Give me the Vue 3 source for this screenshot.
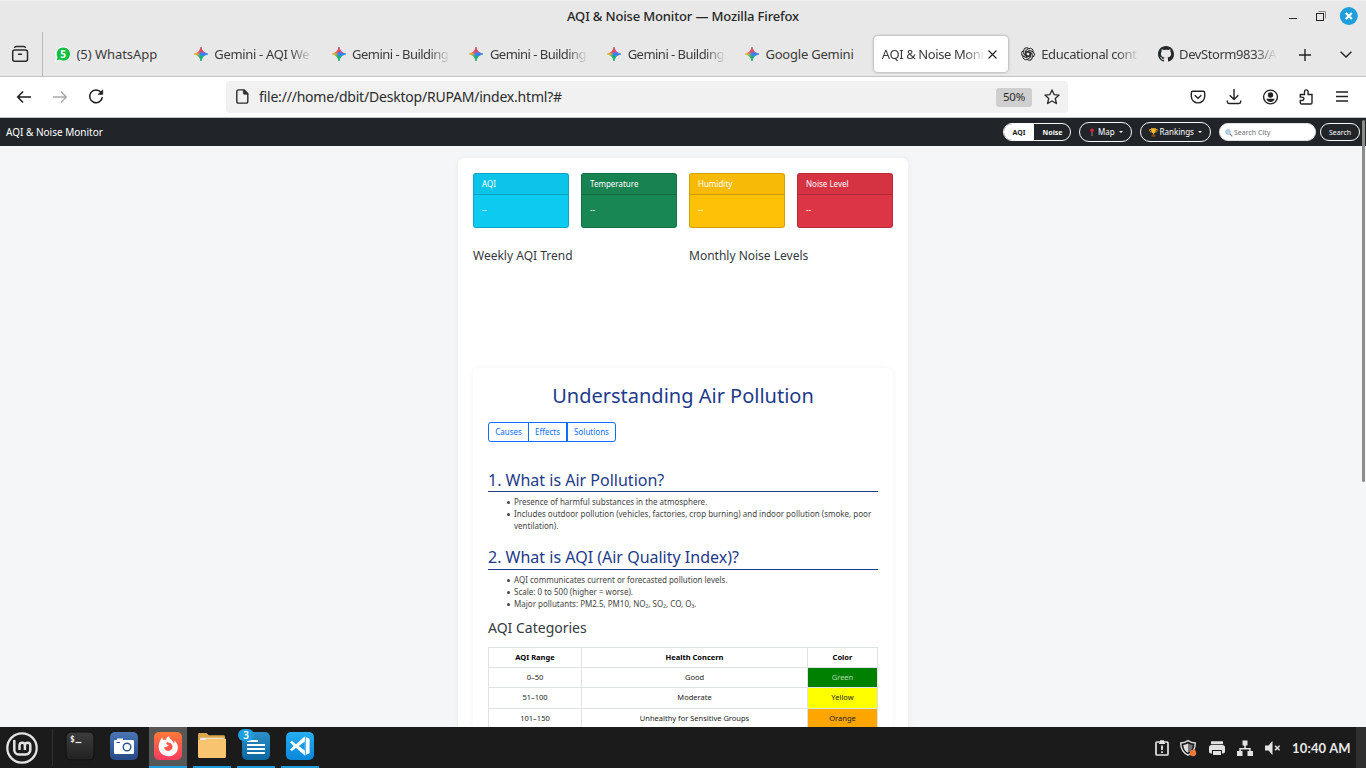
<script setup>
const tabs = [
  { icon: 'wa', text: '(5) WhatsApp', cls: 'w0' },
  { icon: 'gem', text: 'Gemini - AQI We', cls: 'w1' },
  { icon: 'gem', text: 'Gemini - Building', cls: 'w2' },
  { icon: 'gem', text: 'Gemini - Building', cls: 'w2' },
  { icon: 'gem', text: 'Gemini - Building', cls: 'w2' },
  { icon: 'gem', text: 'Google Gemini', cls: 'w3' },
  { icon: '', text: 'AQI & Noise Moni', cls: 'w4', active: true },
  { icon: 'gpt', text: 'Educational cont', cls: 'w5' },
  { icon: 'gh', text: 'DevStorm9833/A', cls: 'w6' },
]
const cards = [
  { name: 'AQI', cls: 'info' },
  { name: 'Temperature', cls: 'success' },
  { name: 'Humidity', cls: 'warning' },
  { name: 'Noise Level', cls: 'danger' },
]
const rows = [
  { range: '0–50', concern: 'Good', color: 'Green', cls: 'green' },
  { range: '51–100', concern: 'Moderate', color: 'Yellow', cls: 'yellow' },
  { range: '101–150', concern: 'Unhealthy for Sensitive Groups', color: 'Orange', cls: 'orange' },
]
const petals = [0, 60, 120, 180, 240, 300]
</script>

<template>
  <div class="screen">
    <svg class="defs" width="0" height="0">
      <defs>
        <linearGradient id="gt" x1="0" y1="0" x2="0" y2="1">
          <stop offset="0" stop-color="#f0444b" /><stop offset=".36" stop-color="#ee4d5d" />
          <stop offset=".5" stop-color="#ee4d5d" stop-opacity="0" />
        </linearGradient>
        <linearGradient id="gb" x1="0" y1="1" x2="0" y2="0">
          <stop offset="0" stop-color="#12b853" /><stop offset=".3" stop-color="#20b65c" />
          <stop offset=".5" stop-color="#20b65c" stop-opacity="0" />
        </linearGradient>
        <linearGradient id="gh" x1="0" y1="0" x2="1" y2="0">
          <stop offset="0" stop-color="#f9be10" /><stop offset=".25" stop-color="#e8b92a" />
          <stop offset=".48" stop-color="#3f8cf0" /><stop offset="1" stop-color="#2f80ff" />
        </linearGradient>
        <linearGradient id="term" x1="0" y1="0" x2="0" y2="1"><stop offset="0" stop-color="#3c3c3c" /><stop offset="1" stop-color="#222" /></linearGradient>
        <linearGradient id="cam" x1="0" y1="0" x2="0" y2="1"><stop offset="0" stop-color="#4a74b4" /><stop offset="1" stop-color="#274a86" /></linearGradient>
        <linearGradient id="fox" x1="0" y1="0" x2="0" y2="1"><stop offset="0" stop-color="#ff7a38" /><stop offset="1" stop-color="#fb3c60" /></linearGradient>
        <linearGradient id="lib" x1="0" y1="0" x2="0" y2="1"><stop offset="0" stop-color="#2d8fca" /><stop offset="1" stop-color="#0a679f" /></linearGradient>
        <linearGradient id="vsc" x1="0" y1="0" x2="0" y2="1"><stop offset="0" stop-color="#25aef3" /><stop offset="1" stop-color="#0a86d8" /></linearGradient>
      </defs>
    </svg>

    <header class="titlebar">
      <div class="wtitle"><span>AQI &amp; Noise Monitor — Mozilla Firefox</span></div>
      <svg class="wbtns" width="80" height="32" viewBox="1286 0 80 32">
        <path d="M1289 18.500h8" stroke="#2b2b2b" stroke-width="1" />
        <path d="M1318.500 11.500h7v7" fill="none" stroke="#888" />
        <rect x="1316.500" y="13.500" width="7" height="7" fill="#e8e8e8" stroke="#222" />
        <circle cx="1348.800" cy="16" r="9" fill="#1f9ede" />
        <path d="M1345.800 13l6 6M1351.800 13l-6 6" stroke="#fff" stroke-width="2.300" />
      </svg>
    </header>

    <div class="tabstrip">
      <div class="allbox">
        <svg width="18" height="18" viewBox="0 0 18 18" fill="none" stroke="#2b2b2b" stroke-width="1.500">
          <rect x="1.700" y="5" width="14.800" height="11.200" rx="2" /><path d="M3.500 2.900c.2-1 .8-1.400 1.700-1.400h7.600c.9 0 1.500.4 1.700 1.400M7 9.200h4" />
        </svg>
      </div>
      <div class="tabs">
        <div v-for="(t, i) in tabs" :key="i" class="tab" :class="{ active: t.active }">
          <svg v-if="t.icon === 'wa'" class="fav" width="16" height="16" viewBox="0 0 16 16">
            <path d="M8 .2a7.500 7.500 0 1 1-3.500 14.300L.2 15.700l.9-4.500A7.500 7.500 0 0 1 8 .2z" fill="#fff" />
            <path d="M8 1.400a6.600 6.600 0 1 1-3.200 12.100l-3 1 .7-3.300A6.600 6.600 0 0 1 8 1.400z" fill="#12c143" />
            <text x="8" y="11.700" text-anchor="middle" font-family="Noto Sans, sans-serif" font-weight="700" font-size="10" fill="#fff">5</text>
          </svg>
          <svg v-else-if="t.icon === 'gem'" class="fav" width="16" height="16" viewBox="0 0 16 16">
            <g stroke-width=".5">
              <path v-for="g in ['gh', 'gt', 'gb']" :key="g" :fill="`url(#${g})`" :stroke="`url(#${g})`" d="M8 1C8.900 5 11 7.100 15 8 11 8.900 8.900 11 8 15 7.100 11 5 8.900 1 8 5 7.100 7.100 5 8 1z" />
            </g>
            <path d="M8 5.500L15 8 8 10.800 6.800 8z" fill="#2f80ff" opacity=".7" />
          </svg>
          <svg v-else-if="t.icon === 'gpt'" class="fav" width="16" height="16" viewBox="0 0 24 24" fill="none" stroke="#262626" stroke-width="1.500">
            <path v-for="a in petals" :key="a" :transform="`rotate(${a} 12 12)`" d="M9.100 13.700V6.400l4-2.400a4.400 4.400 0 0 1 6.500 4.700M9.100 9.500l5.600-3.200" />
          </svg>
          <svg v-else-if="t.icon === 'gh'" class="fav" width="16" height="16" viewBox="0 0 16 16">
            <path fill="#24292e" d="M8 0C3.580 0 0 3.580 0 8c0 3.540 2.290 6.530 5.470 7.590.4.070.55-.17.55-.38 0-.19-.01-.82-.01-1.490-2.010.37-2.530-.49-2.690-.94-.09-.23-.48-.94-.82-1.130-.28-.15-.68-.52-.01-.53.63-.01 1.080.58 1.230.82.72 1.210 1.870.87 2.330.66.070-.52.28-.87.51-1.070-1.780-.2-3.640-.89-3.640-3.950 0-.87.31-1.590.82-2.150-.08-.2-.36-1.020.080-2.120 0 0 .67-.21 2.200.82.64-.18 1.320-.27 2-.27s1.360.09 2 .27c1.530-1.040 2.200-.82 2.200-.82.44 1.100.16 1.920.08 2.120.51.56.82 1.270.82 2.150 0 3.070-1.870 3.750-3.650 3.950.29.25.54.73.54 1.480 0 1.070-.01 1.930-.01 2.200 0 .21.15.46.55.38A8.010 8.010 0 0 0 16 8c0-4.420-3.580-8-8-8z" />
          </svg>
          <span class="ttext" :class="t.cls">{{ t.text }}</span>
          <svg v-if="t.active" class="tx" width="9" height="9" viewBox="0 0 9 9"><path d="M.5.5l8 8M8.500.5l-8 8" stroke="#222" stroke-width="1.100" /></svg>
        </div>
      </div>
      <svg class="plus" width="12" height="12" viewBox="0 0 12 12"><path d="M6 0v12M0 6h12" stroke="#222" stroke-width="1.400" /></svg>
      <svg class="chev" width="12" height="7" viewBox="0 0 12 7"><path d="M.6.7L6 6 11.400.7" fill="none" stroke="#222" stroke-width="1.400" /></svg>
    </div>

    <div class="navbar">
      <div class="navl">
        <svg width="16" height="16" viewBox="0 0 16 16" fill="none" stroke="#1c1c1c" stroke-width="1.500"><path d="M15 8H1.500M7 2.500L1.700 8l5.300 5.500" /></svg>
        <svg width="16" height="16" viewBox="0 0 16 16" fill="none" stroke="#aaa" stroke-width="1.500"><path d="M1 8h13M9 2.500L14.300 8 9 13.500" /></svg>
        <svg width="16" height="16" viewBox="0 0 16 16" fill="none" stroke="#1c1c1c" stroke-width="1.500"><path d="M13 3.300A6.400 6.400 0 1 0 14.400 8.200" /><path d="M14.800.8v4.700H10z" fill="#1c1c1c" stroke-width=".5" /></svg>
      </div>
      <div class="urlbar">
        <svg class="doc" width="13" height="15" viewBox="0 0 13 15" fill="none" stroke="#2b2b2b" stroke-width="1.400"><path d="M2.700.9h5.500l3.600 3.600v7.700a1.900 1.900 0 0 1-1.900 1.900H2.700A1.900 1.900 0 0 1 .8 12.200V2.800A1.900 1.900 0 0 1 2.700.9z" /><path d="M7.300.9v3.300c0 .7.400 1.100 1.100 1.100h3.300z" fill="#2b2b2b" stroke-width=".6" /></svg>
        <span class="url">file:///home/dbit/Desktop/RUPAM/index.html?#</span>
        <span class="zoomlvl">50%</span>
        <svg class="star" width="16" height="16" viewBox="0 0 16 16"><path d="M8 .9l2.100 4.700 5 .5-3.800 3.400 1.100 5L8 12l-4.400 2.500 1.100-5L.9 6.100l5-.5z" fill="none" stroke="#2b2b2b" stroke-width="1.300" stroke-linejoin="round" /></svg>
      </div>
      <div class="navr">
        <svg width="16" height="16" viewBox="0 0 16 16" fill="none" stroke="#222" stroke-width="1.400"><path d="M3 2.200h10c1 0 1.700.7 1.700 1.700v3.300a6.700 6.700 0 0 1-13.400 0V3.900c0-1 .7-1.700 1.700-1.700z" /><path d="M4.700 6.200L8 9.300l3.300-3.100" /></svg>
        <svg width="16" height="16" viewBox="0 0 16 16" fill="none" stroke="#222" stroke-width="1.400"><path d="M8 0v10.300M3.700 6.200L8 10.500l4.300-4.300M1.300 11.500v1.300c0 1 .7 1.700 1.700 1.700h10c1 0 1.700-.7 1.700-1.700v-1.300" /></svg>
        <svg width="16" height="16" viewBox="0 0 16 16"><circle cx="8.500" cy="8" r="6.900" fill="none" stroke="#222" stroke-width="1.400" /><circle cx="8.500" cy="6" r="2.700" fill="#222" /><path d="M4.300 9.800h8.400c-.4 2-2 3.200-4.200 3.200s-3.800-1.200-4.200-3.200z" fill="#222" /></svg>
        <svg width="16" height="16" viewBox="0 0 16 16" fill="none" stroke="#222" stroke-width="1.400"><path d="M2.300 8V5.500h4.200V2.700a1.800 1.800 0 0 1 3.600 0v2.800H14v8.200c0 .8-.5 1.300-1.300 1.300H3.600c-.8 0-1.300-.5-1.300-1.300v-2.200h1.900a1.700 1.700 0 0 0 0-3.400z" /></svg>
        <svg width="16" height="16" viewBox="0 0 16 16"><path d="M2 3h12M2 7.500h12M2 12h12" stroke="#222" stroke-width="1.400" /></svg>
      </div>
    </div>

    <main class="page">
      <nav class="site">
        <span class="brand">AQI &amp; Noise Monitor</span>
        <div class="toggle"><span class="on">AQI</span><span>Noise</span></div>
        <div class="drop map">
          <svg width="8" height="10" viewBox="0 0 8 10"><path d="M4 5v4" stroke="#8b9aa5" stroke-width=".9" /><circle cx="4" cy="3.200" r="1.800" fill="#e0243c" /><path d="M3.200 4h1.600L4.300 7h-.6z" fill="#c41f35" /></svg>
          <span>Map</span><i></i>
        </div>
        <div class="drop rank">
          <svg width="9" height="9" viewBox="0 0 9 9"><path d="M2 1.500H.6C.6 3.500 1.200 4 2.600 4.200M7 1.500h1.400c0 2-.6 2.500-2 2.700" fill="none" stroke="#e69a14" stroke-width=".9" /><path d="M2 .3h5c0 3-.6 4.500-2 5v1.200H4V5.300C2.600 4.800 2 3.300 2 .3z" fill="#fdb827" /><path d="M2.500 6.800h4v1.900h-4z" fill="#8a4b22" /></svg>
          <span>Rankings</span><i></i>
        </div>
        <div class="field">
          <svg width="8" height="8" viewBox="0 0 8 8"><path d="M4.800 4.800l2.500 2.500" stroke="#7c8790" stroke-width="1.200" /><circle cx="3" cy="3" r="2.400" fill="#b5daf5" stroke="#93aec0" stroke-width=".8" /></svg>
          <span>Search City</span>
        </div>
        <div class="sbtn">Search</div>
      </nav>

      <div class="container">
        <div class="cards">
          <div v-for="c in cards" :key="c.name" class="card" :class="c.cls">
            <div class="chead">{{ c.name }}</div>
            <div class="cbody">--</div>
          </div>
        </div>
        <div class="charts"><h4>Weekly AQI Trend</h4><h4>Monthly Noise Levels</h4></div>

        <section class="learn">
          <h1><span>Understanding Air Pollution</span></h1>
          <div class="bgroup"><span class="b1">Causes</span><span class="b2">Effects</span><span class="b3">Solutions</span></div>
          <h2 class="s1">1. What is Air Pollution?</h2>
          <ul>
            <li>Presence of harmful substances in the atmosphere.</li>
            <li>Includes outdoor pollution (vehicles, factories, crop burning) and indoor pollution (smoke, poor<br>ventilation).</li>
          </ul>
          <h2 class="s2">2. What is AQI (Air Quality Index)?</h2>
          <ul>
            <li>AQI communicates current or forecasted pollution levels.</li>
            <li>Scale: 0 to 500 (higher = worse).</li>
            <li>Major pollutants: PM2.5, PM10, NO₂, SO₂, CO, O₃.</li>
          </ul>
          <h3>AQI Categories</h3>
          <div class="table">
            <div class="tr th"><span>AQI Range</span><span>Health Concern</span><span>Color</span></div>
            <div v-for="r in rows" :key="r.range" class="tr"><span>{{ r.range }}</span><span>{{ r.concern }}</span><span :class="r.cls">{{ r.color }}</span></div>
          </div>
        </section>
      </div>
      <div class="thumb"></div>
    </main>

    <footer class="taskbar">
      <svg class="mint" width="32" height="32" viewBox="0 0 32 32" fill="none" stroke="#e3e3e3">
        <circle cx="16" cy="16" r="14.700" stroke-width="2.300" />
        <path d="M8.300 8v10a4.500 4.500 0 0 0 4.500 4.500h7a4.500 4.500 0 0 0 4.500-4.500V13.500a2.700 2.700 0 0 0-5.400 0V18M18.900 13.500a2.700 2.700 0 0 0-5.400 0V18" stroke-width="2.500" />
      </svg>
      <div class="sep"></div>
      <div class="apps">
        <div class="app">
          <svg width="30" height="30" viewBox="0 0 30 30"><rect x=".8" y=".8" width="28.400" height="28.400" rx="5" fill="#0c0c0c" /><rect x="1.500" y="1.500" width="27" height="27" rx="4.500" fill="url(#term)" /><text x="5" y="10.500" font-family="DejaVu Sans Mono, monospace" font-size="8" font-weight="700" fill="#eee">$</text><path d="M10.500 11.500h6" stroke="#eee" stroke-width="1.200" /></svg>
        </div>
        <div class="app">
          <svg width="30" height="30" viewBox="0 0 30 30"><rect x="1" y="1" width="28" height="28" rx="5" fill="url(#cam)" /><path d="M8 7.500h6v2H8z" fill="#fff" /><rect x="5" y="9" width="20" height="14" rx="1.200" fill="#fff" /><circle cx="18" cy="16" r="3.800" fill="#fff" stroke="#2d5290" stroke-width="1.400" /><path d="M7.500 11.500h3.500" stroke="#2d5290" stroke-width="1" /></svg>
        </div>
        <div class="app cur">
          <svg width="30" height="30" viewBox="0 0 30 30"><rect x="1" y="1" width="28" height="28" rx="5" fill="url(#fox)" /><path d="M7.300 9.500c.5-1.400 1.200-2.600 2-3.300 0 1.100.3 2 .9 2.700 1-.3 2-.2 3 .1-.3-1.400 1-3 2.900-4-.2 1.800.9 2.700 2.500 4 1.400 1.200 2.100 2.500 2.200 3.700.8-.7.900-1.800.5-3.200 2.400 2 3.600 4.300 3.600 7 0 5.100-4.200 8.800-9.400 8.800S5.700 21.300 5.700 16c0-2.500.6-4.700 1.600-6.500z" fill="#fff" /><path d="M13.800 9.200c-.2 1.500.9 2.100 2.600 2.500 1.700.5 3.200 2 3.200 4.100 0 2.400-1.900 4.100-4.300 4.100s-4.300-1.800-4.300-4c.7.400 1.700.3 2.300-.1.700-.5 1.400-.7 1.900-.9.400-.2.300-1-.3-1.100-.8-.1-1.600-.2-1.800-.8 0-.8.500-1.100 1-1.500-.5-.7-.6-1.400-.3-2.300z" fill="#fd5a4c" /></svg>
        </div>
        <div class="app run">
          <svg width="30" height="30" viewBox="0 0 30 30"><path d="M1 3.500C1 2.600 1.600 2 2.500 2h7l2.300 2.200h14.700c.9 0 1.500.6 1.500 1.500V10H1z" fill="#dba64b" /><rect x="3" y="6.800" width="24" height="10" rx="1" fill="#e9e9e9" /><path d="M1 9h7l2-1.200h19v17.700c0 .9-.6 1.500-1.500 1.500h-25C1.600 27 1 26.400 1 25.500z" fill="#f8c470" /></svg>
        </div>
        <div class="app run">
          <svg width="30" height="30" viewBox="0 0 30 30"><rect x="1" y="1" width="28" height="28" rx="5" fill="url(#lib)" /><path d="M6 10h11M6 14h18M6 18h18M6 22h18" stroke="#fff" stroke-width="1.900" /></svg>
          <b class="count">3</b>
        </div>
        <div class="app run">
          <svg width="30" height="30" viewBox="0 0 30 30"><rect x="1" y="1" width="28" height="28" rx="5" fill="url(#vsc)" /><path d="M19.600 5.500l5 2.300v14.400l-5 2.300L11 16.800 7 20l-2-1.200L8.600 15 5 11.200 7 10l4 3.200zM19.800 10.600L13.800 15l6 4.400z" fill="#fff" fill-rule="evenodd" /><path d="M20.400 5.500v19" stroke="#1295e3" stroke-width=".8" /></svg>
        </div>
      </div>
      <svg class="tray" width="130" height="24" viewBox="1152 736 130 24">
        <rect x="1156" y="742" width="12" height="13" rx="1" fill="none" stroke="#e3e3e3" stroke-width="1.700" /><path d="M1159 742.800h6v1.200h-6zM1160 740.300h4v2.500h-4z" fill="#e3e3e3" /><path d="M1162 745.500v4.500M1162 751.300v1.800" stroke="#e3e3e3" stroke-width="1.800" />
        <path d="M1188 740.600c2.500 1.700 4.700 2.300 7.300 2.400 0 6-2.400 9.800-7.300 12.200-4.900-2.400-7.300-6.200-7.300-12.200 2.600-.1 4.800-.7 7.300-2.400z" fill="#1b1b1b" stroke="#dedede" stroke-width="1.400" /><path d="M1188 743.500v9.300c-3-1.800-4.600-4.300-4.700-7.900 1.700-.2 3.200-.6 4.700-1.400z" fill="#dedede" /><path d="M1188 743.500v9.300c3-1.800 4.600-4.300 4.700-7.900-1.700-.2-3.200-.6-4.700-1.400z" fill="#777" /><circle cx="1193" cy="753" r="3.200" fill="#f07a3c" />
        <path d="M1211 741.300h12v2.900h-12zM1211.500 745h11a2.500 2.500 0 0 1 2.500 2.500v4a2 2 0 0 1-2 2h-1v-3.500h-10v3.500h-1a2 2 0 0 1-2-2v-4a2.500 2.500 0 0 1 2.500-2.500zM1213 751h8v4h-8z" fill="#e3e3e3" />
        <path d="M1242.500 740.500h5v5h-5zM1237 751h5.500v5h-5.500zM1247.500 751h5.500v5h-5.500zM1244.200 745h1.600v3h4.900v3.500h-1.500v-2h-8.400v2h-1.500V748h4.900z" fill="#e3e3e3" />
        <path d="M1265 745.500h3.500l4-4.500v14l-4-4.500h-3.500z" fill="#e3e3e3" /><path d="M1275 745.700l4.600 4.600M1279.600 745.700l-4.600 4.600" stroke="#e3e3e3" stroke-width="1.500" />
      </svg>
      <span class="clock">10:40 AM</span>
      <div class="corner"></div>
    </footer>
  </div>
</template>

<style>
html, body { margin: 0; overflow: hidden; }
</style>
<style scoped>
* { box-sizing: border-box; }
.screen { width: 1366px; height: 768px; overflow: hidden; display: flex; flex-direction: column; background: #fff; font-family: "Noto Sans", sans-serif; color: #2b2b2b; }
.defs { position: absolute; }
svg { display: block; flex: none; }
h1, h2, h3, h4, ul { margin: 0; font-weight: 400; }
span { white-space: nowrap; }

.titlebar { height: 32px; flex: none; background: #e8e8e8; border-top: 1px solid #f0f0f0; display: flex; justify-content: flex-end; }
.titlebar .wtitle { flex: 1; padding-left: 80px; text-align: center; font-size: 13px; line-height: 30px; font-weight: 500; color: #262626; letter-spacing: -.15px; }
.wbtns { margin-top: -1px; }

.tabstrip { height: 45px; flex: none; background: #e8e8e8; border-bottom: 1px solid #c2c2c2; display: flex; }
.allbox { width: 43px; flex: none; border-right: 1px solid #b9b9b9; padding: 13px 0 0 11px; }
.tabs { display: flex; flex: none; width: 1244px; padding-left: 1px; }
.tab { flex: none; width: 137.800px; height: 38px; padding: 0 11px; display: flex; align-items: center; margin-top: 3px; }
.fav { margin-right: 5.500px; }
.ttext { flex: none; font-size: 13px; line-height: 20px; width: 98px; overflow: hidden; color: #3a3a3a; -webkit-mask-image: linear-gradient(90deg, #000 78%, transparent 100%); mask-image: linear-gradient(90deg, #000 78%, transparent 100%); }
.w0, .w3 { -webkit-mask-image: none; mask-image: none; }
.w0 { letter-spacing: -.05px; }
.w1 { letter-spacing: -.33px; }
.w2 { letter-spacing: -.53px; }
.w3 { letter-spacing: -.22px; }
.w4 { letter-spacing: -.4px; }
.w5 { letter-spacing: -.4px; }
.w6 { letter-spacing: -.42px; }
.tab.active { width: 134px; margin: 4px 1px 0 3px; height: 36px; background: #fff; border-radius: 4px; box-shadow: 0 0 3px rgba(0,0,0,.4); padding: 0 8px; }
.active .ttext { width: 104px; }
.tx { margin-left: 2px; }
.plus { margin: 17px 0 0 12px; }
.chev { margin: 19px 0 0 29px; }

.navbar { height: 41px; flex: none; display: flex; align-items: center; border-bottom: 1px solid #bfc4c4; }
.navl { width: 226px; display: flex; gap: 20px; padding-left: 16px; }
.urlbar { width: 842px; height: 32px; background: #f1f1f1; border-radius: 4px; display: flex; align-items: center; padding: 0 8px 0 10px; }
.url { margin-left: 10px; flex: 1; font-size: 14px; line-height: 20px; padding-bottom: 1px; color: #2b2b2b; letter-spacing: -.21px; }
.doc { margin-top: -1px; }
.zoomlvl { width: 36px; height: 19px; border-radius: 3px; background: #cfcfcf; font-size: 11.500px; line-height: 18px; letter-spacing: -.2px; text-align: center; margin-right: 12px; }
.navr { margin-left: 122px; display: flex; gap: 20px; }

.page { flex: 1; min-height: 0; background: #f4f6f8; overflow: hidden; position: relative; display: flex; flex-direction: column; align-items: center; }
.site { width: 1366px; height: 28px; flex: none; background: #212529; display: flex; align-items: center; color: #fff; padding: 0 6px; }
.brand { flex: 1; font-size: 10px; line-height: 14px; }
.toggle { width: 68px; height: 18px; border: 1px solid #f8f9fa; border-radius: 9px; overflow: hidden; display: flex; font-size: 7px; font-weight: 700; line-height: 17px; text-align: center; }
.toggle span { flex: 1; padding-left: 1px; }
.toggle .on { flex: none; width: 30px; padding: 0; background: #fff; color: #212529; }
.drop { height: 20px; border: 1px solid #f8f9fa; border-radius: 10px; display: flex; align-items: center; margin-left: 8px; font-size: 8px; line-height: 18px; padding-left: 8px; }
.drop i { border: 2px solid transparent; border-top-color: #fff; border-bottom: 0; margin-left: 4px; }
.map { width: 53px; }
.map span { margin-left: 2px; }
.rank { width: 71px; }
.rank span { margin-left: 1.500px; }
.field { width: 97px; height: 18px; background: #fff; border: 1px solid #dee2e6; border-radius: 9px; margin: 0 4px 0 8px; display: flex; align-items: center; padding: 1px 0 0 5px; gap: 1px; color: #6c7075; font-size: 7px; }
.sbtn { width: 40px; height: 18px; border: 1px solid #f8f9fa; border-radius: 9px; font-size: 7px; line-height: 17px; text-align: center; }

.container { width: 450px; height: 620px; flex: none; margin-top: 12px; background: #fff; border-radius: 6px; box-shadow: 0 0 8px rgba(0,0,0,.05); padding: 15px; }
.cards { display: grid; grid-template-columns: repeat(4, 96px); gap: 12px; }
.card { height: 55px; border: 1px solid rgba(0,0,0,.175); border-radius: 3px; color: #fff; font-size: 8px; }
.chead { height: 21px; line-height: 20px; padding-left: 8px; background: rgba(0,0,0,.03); border-bottom: 1px solid rgba(0,0,0,.175); }
.cbody { padding: 9px 8px; line-height: 12px; }
.info { background-color: #0dcaf0; }
.success { background-color: #198754; }
.warning { background-color: #ffc107; }
.danger { background-color: #dc3545; }
.charts { display: grid; grid-template-columns: 216px 204px; height: 139px; margin-top: 1px; padding-top: 19px; }
h4 { font-size: 12px; line-height: 15px; color: #343a40; }
.learn { height: 400px; border-radius: 6px; box-shadow: 0 0 6px rgba(0,0,0,.05); padding: 16px 15px; }
h1 { font-size: 20px; line-height: 24px; color: #1e3a8a; text-align: center; }
.bgroup { display: flex; width: 128px; height: 20px; margin-top: 14px; border: 1px solid #0d6efd; border-radius: 3px; color: #0d6efd; font-size: 8px; line-height: 18px; text-align: center; }
.b1 { width: 39px; }
.b2 { width: 38px; border-left: 1px solid #0d6efd; }
.b3 { flex: 1; border-left: 2px solid #0d6efd; }
h2 { font-size: 16px; line-height: 19px; color: #1e3a8a; border-bottom: 1px solid #1e3a8a; }
.s1 { margin-top: 28px; padding-top: 1px; height: 22px; }
.s2 { margin-top: 14px; height: 24px; padding-top: 2px; }
ul { padding: 0 0 0 26px; margin-top: 4px; font-size: 8px; line-height: 12px; color: #444; list-style: none; }
li { white-space: nowrap; }
li::before { content: ""; float: left; width: 3px; height: 3px; border-radius: 50%; background: #444; margin: 5px 0 0 -7px; }
h3 { font-size: 14px; line-height: 18px; margin-top: 9px; color: #343a40; }
.table { margin-top: 10px; border: 1px solid #dee2e6; border-bottom: 0; font-size: 7.500px; color: #222; }
.tr { display: grid; grid-template-columns: 93px 226px 69px; height: 20.200px; line-height: 19px; text-align: center; border-bottom: 1px solid #dee2e6; }
.tr span { border-right: 1px solid #dee2e6; }
.tr span:last-child { border-right: 0; }
.th { font-weight: 700; color: #000; }
.green { background: #008000; color: #b5dcb5; }
.yellow { background: #ff0; }
.orange { background: #ffa500; }
.thumb { position: absolute; right: 1px; top: 2px; width: 3px; height: 362px; border-radius: 2px; background: #8c8c8c; }

.taskbar { height: 41px; flex: none; background: #1b1b1b; display: flex; align-items: center; }
.mint { margin-left: 6px; }
.sep { width: 1px; height: 37px; margin: 0 8px 0 14px; background: #303030; }
.apps { display: flex; gap: 6px; }
.app { width: 38px; height: 41px; display: flex; justify-content: center; padding-top: 4px; border-bottom: 2px solid transparent; position: relative; }
.cur { background: #575757; border-bottom-color: #1f9ede; }
.run { border-bottom-color: #1f9ede; }
.count { position: absolute; left: 1px; top: 2px; width: 16px; height: 12px; border-radius: 6px; background: #1f9ede; color: #fff; font-size: 10px; line-height: 12px; text-align: center; font-weight: 600; }
.tray { margin-left: 833px; }
.clock { width: 74px; padding: 1px 0 0 10px; font-family: Lato, sans-serif; font-size: 13px; font-weight: 700; color: #e8e8e8; letter-spacing: .15px; }
.corner { width: 10px; height: 41px; background: #2f2f2f; }
</style>
